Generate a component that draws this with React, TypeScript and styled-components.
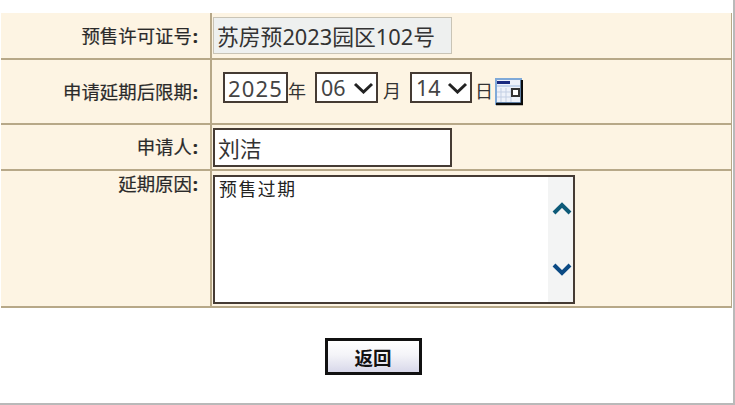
import { createGlobalStyle, styled } from "styled-components";

const GlobalStyle = createGlobalStyle`
  html, body {
    margin: 0;
    padding: 0;
    background: #fff;
  }
  body {
    font-family: "Noto Sans", "Noto Sans CJK SC", sans-serif;
    color: #222;
  }
`;

const Page = styled.div`
  box-sizing: border-box;
  width: 735px;
  height: 405px;
  padding: 13px 0 0 1px;
  border-right: 2px solid #b9b9b9;
  border-bottom: 2px solid #b9b9b9;
  overflow: hidden;
`;

const FormTable = styled.div`
  width: 730px;
  display: grid;
  grid-template-columns: 211px 1fr;
  grid-template-rows: 47px 65px 46px 137px;
  background: #fdf4e3;
  border-right: 1px solid #b7a888;
`;

const Label = styled.div<{ $top?: boolean }>`
  display: flex;
  justify-content: flex-end;
  align-items: ${(p) => (p.$top ? "flex-start" : "center")};
  padding: ${(p) => (p.$top ? "1px 12px 0 0" : "0 12px 0 0")};
  border-bottom: 2px solid #b7a888;
  border-right: 2px solid #b7a888;
  font-size: 18.4px;
  line-height: 24px;
  color: #2a2a2a;
  -webkit-text-stroke: 0.2px #2a2a2a;
`;

const Colon = styled.span`
  font-weight: 700;
  margin-left: 1px;
`;

const Field = styled.div<{ $top?: boolean }>`
  display: flex;
  align-items: ${(p) => (p.$top ? "flex-start" : "center")};
  padding: ${(p) => (p.$top ? "4px 0 0 1px" : "0 0 0 1px")};
  border-bottom: 2px solid #b7a888;
`;

const TextInput = styled.input<{ $readOnlyLook?: boolean }>`
  box-sizing: border-box;
  width: 239px;
  height: ${(p) => (p.$readOnlyLook ? "37px" : "39px")};
  padding: 0 3px;
  font: 21.8px "Noto Sans", "Noto Sans CJK SC", sans-serif;
  color: #333;
  background: ${(p) => (p.$readOnlyLook ? "#eef0ef" : "#fff")};
  border: ${(p) => (p.$readOnlyLook ? "1px solid #c9c4b6" : "2px solid #453b34")};
  border-radius: 0;
  outline: none;
`;

const DateRow = styled.div`
  display: flex;
  align-items: center;
  padding: 0 0 0 10px;
  margin-top: -8px;
  font-size: 18px;
  color: #333;
`;

const YearInput = styled.input`
  box-sizing: border-box;
  width: 65px;
  height: 31px;
  padding: 0 3px;
  font: 22px "Noto Sans", sans-serif;
  color: #444;
  letter-spacing: 1.2px;
  background: #fff;
  border: 2px solid #453b34;
  border-radius: 0;
  outline: none;
`;

const SelectBox = styled.div<{ $width: number }>`
  box-sizing: border-box;
  display: flex;
  align-items: center;
  justify-content: space-between;
  width: ${(p) => p.$width}px;
  height: 31px;
  padding: 0 2px 0 4px;
  font-size: 21.5px;
  color: #444;
  background: #fff;
  border: 2px solid #453b34;
`;

const Unit = styled.span<{ $before: number; $after: number }>`
  margin: 6px ${(p) => p.$after}px 0 ${(p) => p.$before}px;
  width: 18px;
  font-size: 18px;
  line-height: 24px;
`;

const CalendarIcon = styled.svg`
  width: 28px;
  height: 28px;
  margin-top: 8px;
`;

const ReasonBox = styled.div`
  box-sizing: border-box;
  display: flex;
  width: 362px;
  height: 129px;
  background: #fff;
  border: 2px solid #453b34;
`;

const ReasonText = styled.div`
  flex: 1;
  padding: 0 4px;
  font-size: 17.8px;
  line-height: 24px;
  letter-spacing: 1.6px;
  color: #222;
`;

const ScrollTrack = styled.div`
  box-sizing: border-box;
  width: 25px;
  padding: 25px 0 0 2px;
  background: #f3f4f4;
  display: flex;
  flex-direction: column;
  gap: 46px;
  align-items: center;
`;

const ButtonRow = styled.div`
  display: flex;
  justify-content: center;
  padding: 30px 0 0 14px;
  width: 730px;
  box-sizing: border-box;
`;

const BackButton = styled.button`
  box-sizing: border-box;
  width: 97px;
  height: 37px;
  padding: 0;
  font: 700 18.5px "Noto Sans CJK SC", sans-serif;
  color: #111;
  background: linear-gradient(#ffffff, #f4f4f8 45%, #d8d8ea);
  border: 3px solid #111;
  border-radius: 0;
`;

function SelectArrow() {
  return (
    <svg width="21" height="12" viewBox="0 0 21 12">
      <path d="M2 2l8.500 8L19 2" fill="none" stroke="#222" strokeWidth="3" />
    </svg>
  );
}

function ScrollArrow({ down }: { down?: boolean }) {
  return (
    <svg width="20" height="14" viewBox="0 0 20 14">
      <path
        d={down ? "M2 3l8 8 8-8" : "M2 11l8-8 8 8"}
        fill="none"
        stroke={down ? "#0b4a84" : "#0d5a78"}
        strokeWidth="4"
      />
    </svg>
  );
}

function App() {
  return (
    <Page>
      <GlobalStyle />
      <FormTable>
        <Label>
          预售许可证号<Colon>:</Colon>
        </Label>
        <Field>
          <TextInput $readOnlyLook readOnly value="苏房预2023园区102号" />
        </Field>

        <Label>
          申请延期后限期<Colon>:</Colon>
        </Label>
        <Field>
          <DateRow>
            <YearInput readOnly value="2025" />
            <Unit $before={0} $after={9}>年</Unit>
            <SelectBox $width={63}>
              06
              <SelectArrow />
            </SelectBox>
            <Unit $before={5} $after={9}>月</Unit>
            <SelectBox $width={62}>
              14
              <SelectArrow />
            </SelectBox>
            <Unit $before={3} $after={2}>日</Unit>
            <CalendarIcon viewBox="0 0 28 28">
              <rect x="0" y="0" width="27" height="27" fill="#7fa9d8" />
              <rect x="2" y="2" width="23" height="22" fill="#eef2fa" />
              <rect x="2" y="3" width="13" height="3" fill="#1a2a80" />
              <rect x="2" y="7" width="23" height="2" fill="#c6d6ec" />
              <path d="M6 10v14M11 10v14M16 10v14M2 14h14M2 19h14" stroke="#c3cfe4" strokeWidth="1" />
              <rect x="17" y="11" width="7" height="7" fill="#fff" stroke="#333" strokeWidth="2" />
              <path d="M1 26h26V2" fill="none" stroke="#0a0a0a" strokeWidth="2.500" />
            </CalendarIcon>
          </DateRow>
        </Field>

        <Label>
          申请人<Colon>:</Colon>
        </Label>
        <Field>
          <TextInput readOnly value="刘洁" />
        </Field>

        <Label $top>
          延期原因<Colon>:</Colon>
        </Label>
        <Field $top>
          <ReasonBox>
            <ReasonText>预售过期</ReasonText>
            <ScrollTrack>
              <ScrollArrow />
              <ScrollArrow down />
            </ScrollTrack>
          </ReasonBox>
        </Field>
      </FormTable>
      <ButtonRow>
        <BackButton>返回</BackButton>
      </ButtonRow>
    </Page>
  );
}

export default App;
